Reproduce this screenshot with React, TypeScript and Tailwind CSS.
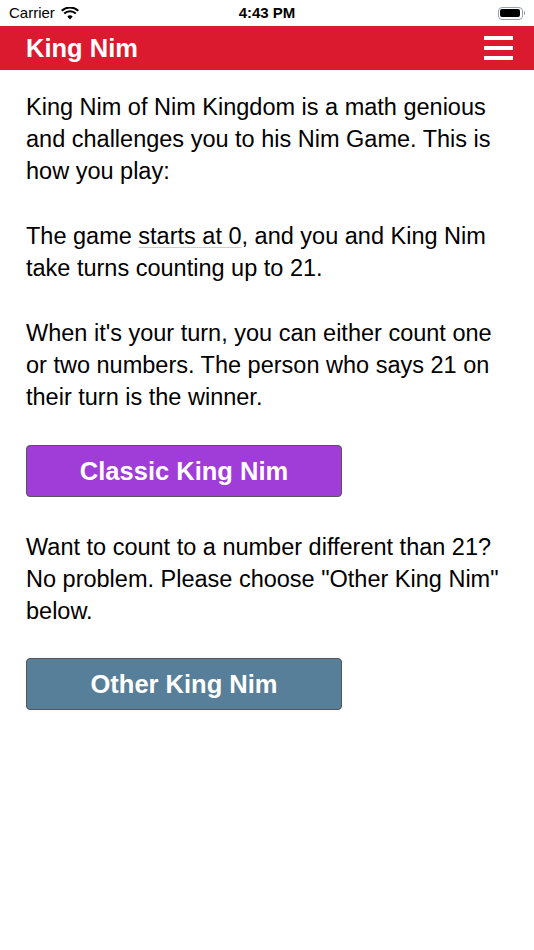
export default function App() {
  return (
    <div className="w-[534px] h-[950px] bg-white" style={{ fontFamily: '"Liberation Sans", Arial, sans-serif' }}>
      {/* status bar */}
      <div className="h-[26px] flex items-center justify-between px-[9px] text-[15px] text-black relative">
        <div className="flex items-center gap-[6px]">
          <span>Carrier</span>
          <svg width="18" height="13" viewBox="0 0 18 13" fill="black">
            <path d="M9 12.5 6.3 9.6a3.9 3.9 0 0 1 5.4 0z" />
            <path d="M3.9 7.2a7.4 7.4 0 0 1 10.2 0l1.4-1.5a9.5 9.5 0 0 0-13 0z" />
            <path d="M1.4 4.6a11 11 0 0 1 15.2 0L18 3.1a13 13 0 0 0-18 0z" />
          </svg>
        </div>
        <span className="absolute left-1/2 -translate-x-1/2 font-semibold">4:43 PM</span>
        <div className="flex items-center">
          <div className="w-[25px] h-[13px] rounded-[4px] border border-gray-400 p-[1.5px]">
            <div className="w-full h-full rounded-[2px] bg-black" />
          </div>
          <div className="w-[1.5px] h-[4px] bg-gray-400 ml-[1px] rounded-r" />
        </div>
      </div>

      {/* header */}
      <div className="h-[44px] bg-[#dc1a2f] flex items-center justify-between pl-[26px] pr-[21px]">
        <span className="text-white font-bold text-[25.5px]">King Nim</span>
        <div className="flex flex-col gap-[6px]">
          <div className="w-[29px] h-[4px] bg-white" />
          <div className="w-[29px] h-[4px] bg-white" />
          <div className="w-[29px] h-[4px] bg-white" />
        </div>
      </div>

      {/* content */}
      <div className="pl-[26px] w-[510px] pt-[21px] text-[23.5px] leading-[32px] text-black">
        <p>King Nim of Nim Kingdom is a math genious and challenges you to his Nim Game. This is how you play:</p>
        <p className="mt-[33px]">
          The game <span className="underline decoration-[#cfcfcf] decoration-1 underline-offset-[3px]">starts at 0</span>, and you and King Nim take turns counting up to 21.
        </p>
        <p className="mt-[33px]">
          When it's your turn, you can either count one or two numbers. The person who says 21 on their turn is the winner.
        </p>
        <button className="mt-[32px] w-[316px] h-[52px] bg-[#a03cd8] border border-[#555] rounded-[4px] text-white font-bold text-[25.5px] flex items-center justify-center">
          Classic King Nim
        </button>
        <p className="mt-[34px]">
          Want to count to a number different than 21? No problem. Please choose "Other King Nim" below.
        </p>
        <button className="mt-[31px] w-[316px] h-[52px] bg-[#577f99] border border-[#555] rounded-[4px] text-white font-bold text-[25.5px] flex items-center justify-center">
          Other King Nim
        </button>
      </div>
    </div>
  );
}
